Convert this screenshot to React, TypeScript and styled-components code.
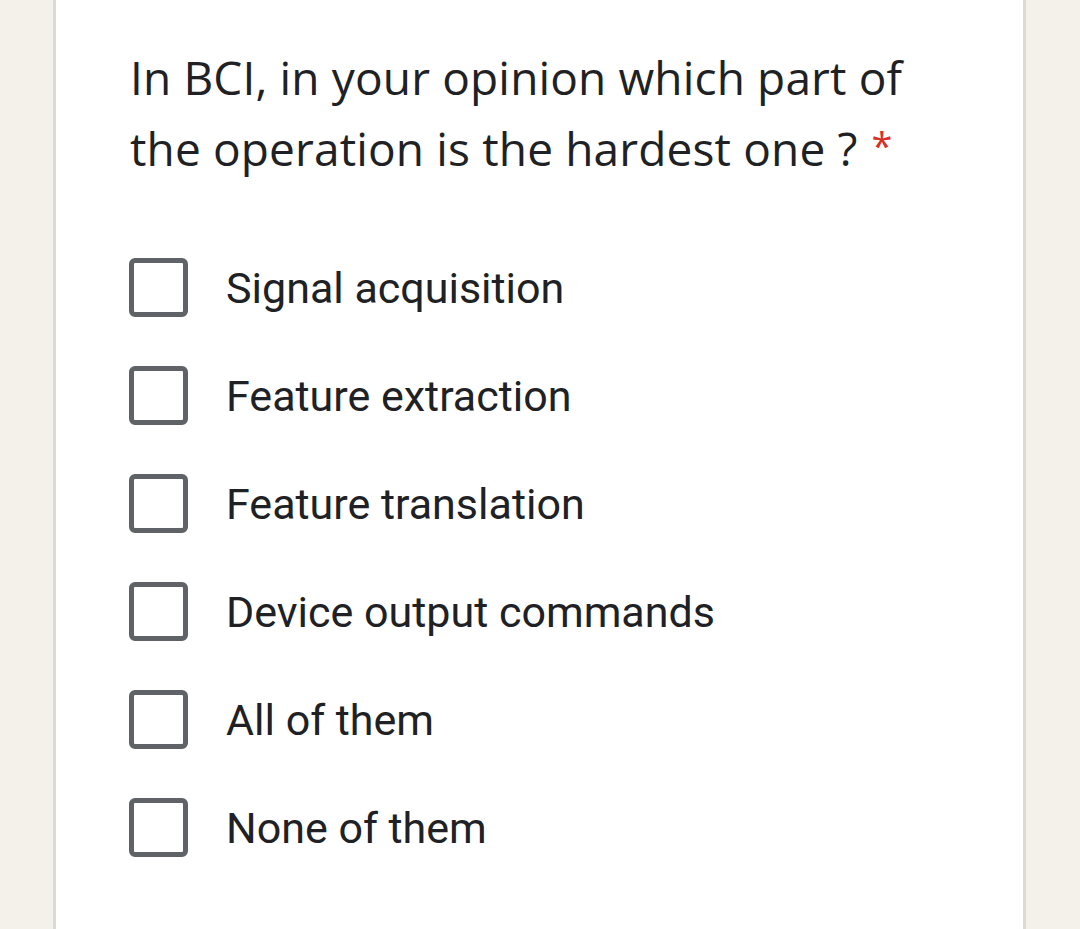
import React from 'react'
import styled, { createGlobalStyle } from 'styled-components'

const GlobalStyle = createGlobalStyle`
  html, body {
    margin: 0;
    padding: 0;
    background: #f4f1ea;
  }
`

// the white form card
const Card = styled.div`
  box-sizing: border-box;
  margin-left: 53px;
  width: 973px;
  min-height: 929px;
  background: #ffffff;
  border-left: 3px solid #dcdad6;
  border-right: 3px solid #dcdad6;
  padding: 42px 0 0 73px;
`

const Title = styled.div`
  font-family: "Open Sans", "Noto Sans", sans-serif;
  font-size: 46px;
  letter-spacing: 0.15px;
  line-height: 71px;
  color: #202124;
  width: 820px;
  padding-left: 1px;
`

const Star = styled.span`
  color: #d93025;
  margin-left: 14px;
  font-size: 38px;
  line-height: 1;
  vertical-align: 6px;
`

const Options = styled.div`
  display: flex;
  flex-direction: column;
  gap: 49px;
  margin-top: 74px;
`

const Row = styled.label`
  display: flex;
  align-items: center;
  gap: 38px;
`

const Box = styled.span`
  box-sizing: border-box;
  width: 59px;
  height: 59px;
  border: 5px solid #5f6368;
  border-radius: 6px;
  flex: none;
`

const Label = styled.span`
  font-family: Roboto, "Liberation Sans", sans-serif;
  font-size: 43px;
  color: #202124;
`

const options = [
  'Signal acquisition',
  'Feature extraction',
  'Feature translation',
  'Device output commands',
  'All of them',
  'None of them',
]

export default function App() {
  return (
    <>
      <GlobalStyle />
      <Card>
        <Title>
          In BCI, in your opinion which part of the operation is the hardest one ?
          <Star>*</Star>
        </Title>
        <Options>
          {options.map((o) => (
            <Row key={o}>
              <Box />
              <Label>{o}</Label>
            </Row>
          ))}
        </Options>
      </Card>
    </>
  )
}
